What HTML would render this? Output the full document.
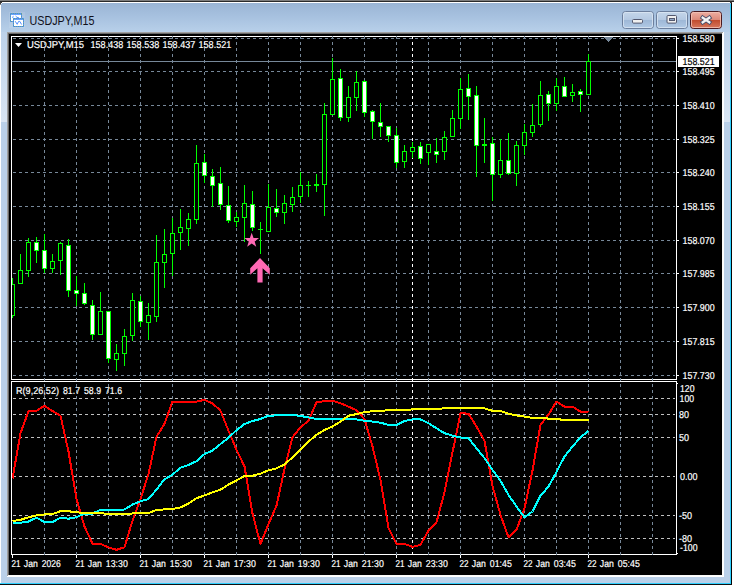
<!DOCTYPE html>
<html lang="en">
<head>
<meta charset="utf-8">
<title>USDJPY,M15</title>
<style>
html,body{margin:0;padding:0;background:#ffffff;overflow:hidden;}
body{width:734px;height:585px;font-family:"Liberation Sans",sans-serif;}
svg{display:block;position:absolute;left:0;top:0;}
text{white-space:pre;}
</style>
</head>
<body>
<svg width="734" height="585" viewBox="0 0 734 585" role="img" aria-label="USDJPY,M15 chart window">
<defs>
<linearGradient id="tg" x1="0" y1="0" x2="0" y2="1"><stop offset="0" stop-color="#99b4d4"/><stop offset="0.5" stop-color="#a8c2e0"/><stop offset="1" stop-color="#b9d1ea"/></linearGradient>
<linearGradient id="bb" x1="0" y1="0" x2="0" y2="1"><stop offset="0" stop-color="#c5d6ea"/><stop offset="0.48" stop-color="#b4c9e2"/><stop offset="0.5" stop-color="#9db7d6"/><stop offset="1" stop-color="#b3cbe6"/></linearGradient>
<linearGradient id="cb" x1="0" y1="0" x2="0" y2="1"><stop offset="0" stop-color="#eeb0a4"/><stop offset="0.48" stop-color="#dd8a7a"/><stop offset="0.5" stop-color="#c04a2c"/><stop offset="1" stop-color="#d87a60"/></linearGradient>
<linearGradient id="rg" x1="0" y1="0" x2="0" y2="1"><stop offset="0" stop-color="#bdd2ea"/><stop offset="1" stop-color="#d9e5f3"/></linearGradient>
</defs>
<rect x="0" y="0" width="734" height="585" fill="#ffffff"/>
<rect x="0" y="2" width="731" height="582" fill="#bad0e9"/>
<rect x="0" y="2" width="731" height="31" fill="url(#tg)"/>
<rect x="0" y="0" width="734" height="1" fill="#7d7d7d"/>
<rect x="0" y="1" width="734" height="1" fill="#2a2a2a"/>
<rect x="2" y="2" width="728" height="1" fill="#ffffff"/>
<rect x="0" y="2" width="2" height="1" fill="#3a3a3a"/>
<rect x="0" y="3" width="1" height="1" fill="#3a3a3a"/>
<rect x="0" y="4" width="1" height="1" fill="#8a8a8a"/>
<rect x="1" y="3" width="1" height="1" fill="#e8eef6"/>
<rect x="730" y="2" width="2" height="1" fill="#3a3a3a"/>
<rect x="731" y="3" width="1" height="1" fill="#3a3a3a"/>
<rect x="0" y="5" width="1" height="578" fill="#ffffff"/>
<rect x="730" y="4" width="1" height="580" fill="#2fd0ff"/>
<rect x="731" y="3" width="1" height="582" fill="#050505"/>
<rect x="732" y="2" width="2" height="583" fill="#ffffff"/>
<rect x="0" y="583" width="731" height="1" fill="#2fd0ff"/>
<rect x="0" y="584" width="732" height="1" fill="#101010"/>
<rect x="724" y="32" width="6" height="90" fill="url(#rg)"/>
<rect x="1" y="32" width="6" height="90" fill="url(#rg)"/>
<rect x="7" y="32" width="717" height="545" fill="#ffffff"/>
<rect x="7" y="32" width="716" height="544" fill="#a0a0a0"/>
<rect x="8" y="33" width="715" height="543" fill="#fafafa"/>
<rect x="8" y="33" width="714" height="542" fill="#696969"/>
<rect x="9" y="34" width="713" height="541" fill="#000000"/>
<rect x="9" y="12" width="16" height="16" fill="#ffffff" fill-opacity="0.10"/>
<g shape-rendering="crispEdges">
<rect x="10" y="13" width="12" height="9" fill="#4f8eff"/>
<rect x="11" y="14" width="10" height="1" fill="#6aa2ff"/>
<rect x="11" y="15" width="10" height="6" fill="#ffffff"/>
<rect x="13" y="18" width="11" height="9" fill="#4f8eff"/>
<rect x="14" y="19" width="9" height="1" fill="#6aa2ff"/>
<rect x="14" y="20" width="9" height="6" fill="#ffffff"/>
<path d="M11 13.5 H22 M14 18.5 H24 M14 26.5 H24 M11 21.5 H13" stroke="#5f9f9a" stroke-width="1" stroke-dasharray="1 1" fill="none"/>
<path d="M10.5 14 V22 M21.5 14 V18 M13.5 19 V27 M23.5 19 V27" stroke="#5f9f9a" stroke-width="1" stroke-dasharray="1 1" fill="none"/>
</g>
<path d="M13.6 16.2 L12.4 17.2 L13.6 18.2 M15.6 16 L17 17.4 L18.8 17.6" stroke="#4f8eff" stroke-width="1" fill="none"/>
<path d="M15.2 21.2 L17.2 24.3 L18.6 21.4 L19.8 21.4 L21.6 24.5" stroke="#4f8eff" stroke-width="1" fill="none"/>
<text x="29.5" y="25" font-family="'Liberation Sans', sans-serif" font-size="12px" fill="#10101a" textLength="65" lengthAdjust="spacingAndGlyphs">USDJPY,M15</text>
<rect x="622.5" y="11.5" width="31" height="17" rx="3" ry="3" fill="url(#bb)" stroke="#6c7f9d" stroke-width="1"/>
<rect x="623.5" y="12.5" width="29" height="15" rx="2" ry="2" fill="none" stroke="#dbe6f3" stroke-opacity="0.8" stroke-width="1"/>
<rect x="632.5" y="19.5" width="10" height="3.6" rx="1" fill="#f0f0f0" stroke="#53586e" stroke-width="1"/>
<rect x="656.5" y="11.5" width="31" height="17" rx="3" ry="3" fill="url(#bb)" stroke="#6c7f9d" stroke-width="1"/>
<rect x="657.5" y="12.5" width="29" height="15" rx="2" ry="2" fill="none" stroke="#dbe6f3" stroke-opacity="0.8" stroke-width="1"/>
<rect x="667" y="15.5" width="9.5" height="7.6" rx="1" fill="#f0f0f0" stroke="#53586e" stroke-width="1"/>
<rect x="669.5" y="18.5" width="5" height="2" fill="#8fa6c6" stroke="#53586e" stroke-width="1"/>
<rect x="690.5" y="11.5" width="31" height="17" rx="3" ry="3" fill="url(#cb)" stroke="#4a1a20" stroke-width="1"/>
<rect x="691.5" y="12.5" width="29" height="15" rx="2" ry="2" fill="none" stroke="#f3c4b8" stroke-opacity="0.8" stroke-width="1"/>
<path d="M702.7 17.7 L709.3 22.3 M709.3 17.7 L702.7 22.3" stroke="#4c516c" stroke-width="4.2" stroke-linecap="square" fill="none"/>
<path d="M702.7 17.7 L709.3 22.3 M709.3 17.7 L702.7 22.3" stroke="#f4f4f4" stroke-width="2.3" stroke-linecap="square" fill="none"/>
<g shape-rendering="crispEdges">
<rect x="11" y="36" width="666" height="1" fill="#ffffff"/>
<rect x="11" y="379" width="666" height="1" fill="#ffffff"/>
<rect x="11" y="36" width="1" height="344" fill="#ffffff"/>
<rect x="676" y="36" width="1" height="344" fill="#ffffff"/>
<rect x="11" y="381" width="666" height="1" fill="#ffffff"/>
<rect x="11" y="554" width="666" height="1" fill="#ffffff"/>
<rect x="11" y="381" width="1" height="174" fill="#ffffff"/>
<rect x="676" y="381" width="1" height="174" fill="#ffffff"/>
<path d="M13 38.5 H675" stroke="#778899" stroke-width="1" stroke-dasharray="3 3" fill="none"/>
<path d="M13 71.5 H675" stroke="#778899" stroke-width="1" stroke-dasharray="3 3" fill="none"/>
<path d="M13 105.5 H675" stroke="#778899" stroke-width="1" stroke-dasharray="3 3" fill="none"/>
<path d="M13 139.5 H675" stroke="#778899" stroke-width="1" stroke-dasharray="3 3" fill="none"/>
<path d="M13 172.5 H675" stroke="#778899" stroke-width="1" stroke-dasharray="3 3" fill="none"/>
<path d="M13 206.5 H675" stroke="#778899" stroke-width="1" stroke-dasharray="3 3" fill="none"/>
<path d="M13 240.5 H675" stroke="#778899" stroke-width="1" stroke-dasharray="3 3" fill="none"/>
<path d="M13 273.5 H675" stroke="#778899" stroke-width="1" stroke-dasharray="3 3" fill="none"/>
<path d="M13 307.5 H675" stroke="#778899" stroke-width="1" stroke-dasharray="3 3" fill="none"/>
<path d="M13 341.5 H675" stroke="#778899" stroke-width="1" stroke-dasharray="3 3" fill="none"/>
<path d="M13 375.5 H675" stroke="#778899" stroke-width="1" stroke-dasharray="3 3" fill="none"/>
<path d="M44.5 36 V555" stroke="#778899" stroke-width="1" stroke-dasharray="3 3" fill="none"/>
<path d="M76.5 36 V555" stroke="#778899" stroke-width="1" stroke-dasharray="3 3" fill="none"/>
<path d="M108.5 36 V555" stroke="#778899" stroke-width="1" stroke-dasharray="3 3" fill="none"/>
<path d="M140.5 36 V555" stroke="#778899" stroke-width="1" stroke-dasharray="3 3" fill="none"/>
<path d="M172.5 36 V555" stroke="#778899" stroke-width="1" stroke-dasharray="3 3" fill="none"/>
<path d="M204.5 36 V555" stroke="#778899" stroke-width="1" stroke-dasharray="3 3" fill="none"/>
<path d="M236.5 36 V555" stroke="#778899" stroke-width="1" stroke-dasharray="3 3" fill="none"/>
<path d="M268.5 36 V555" stroke="#778899" stroke-width="1" stroke-dasharray="3 3" fill="none"/>
<path d="M300.5 36 V555" stroke="#778899" stroke-width="1" stroke-dasharray="3 3" fill="none"/>
<path d="M332.5 36 V555" stroke="#778899" stroke-width="1" stroke-dasharray="3 3" fill="none"/>
<path d="M364.5 36 V555" stroke="#778899" stroke-width="1" stroke-dasharray="3 3" fill="none"/>
<path d="M396.5 36 V555" stroke="#778899" stroke-width="1" stroke-dasharray="3 3" fill="none"/>
<path d="M428.5 36 V555" stroke="#778899" stroke-width="1" stroke-dasharray="3 3" fill="none"/>
<path d="M460.5 36 V555" stroke="#778899" stroke-width="1" stroke-dasharray="3 3" fill="none"/>
<path d="M492.5 36 V555" stroke="#778899" stroke-width="1" stroke-dasharray="3 3" fill="none"/>
<path d="M524.5 36 V555" stroke="#778899" stroke-width="1" stroke-dasharray="3 3" fill="none"/>
<path d="M556.5 36 V555" stroke="#778899" stroke-width="1" stroke-dasharray="3 3" fill="none"/>
<path d="M588.5 36 V555" stroke="#778899" stroke-width="1" stroke-dasharray="3 3" fill="none"/>
<path d="M620.5 36 V555" stroke="#778899" stroke-width="1" stroke-dasharray="3 3" fill="none"/>
<path d="M652.5 36 V555" stroke="#778899" stroke-width="1" stroke-dasharray="3 3" fill="none"/>
<path d="M13 398.5 H675" stroke="#c0c0c0" stroke-width="1" stroke-dasharray="3 3" fill="none"/>
<path d="M13 414.5 H675" stroke="#c0c0c0" stroke-width="1" stroke-dasharray="3 3" fill="none"/>
<path d="M13 437.5 H675" stroke="#c0c0c0" stroke-width="1" stroke-dasharray="3 3" fill="none"/>
<path d="M13 476.5 H675" stroke="#c0c0c0" stroke-width="1" stroke-dasharray="3 3" fill="none"/>
<path d="M13 515.5 H675" stroke="#c0c0c0" stroke-width="1" stroke-dasharray="3 3" fill="none"/>
<path d="M13 538.5 H675" stroke="#c0c0c0" stroke-width="1" stroke-dasharray="3 3" fill="none"/>
<path d="M412.5 36 V555" stroke="#ffffff" stroke-width="1" stroke-dasharray="3 3" fill="none"/>
<rect x="12" y="61" width="664" height="1" fill="#778899"/>
<path d="M604 37 H613 L608.5 42 Z" fill="#778899"/>
<rect x="12" y="278" width="1" height="40" fill="#00ff00"/>
<rect x="10" y="284" width="5" height="32" fill="#00ff00"/>
<rect x="11" y="285" width="3" height="30" fill="#000000"/>
<rect x="20" y="254" width="1" height="30" fill="#00ff00"/>
<rect x="18" y="270" width="5" height="14" fill="#00ff00"/>
<rect x="19" y="271" width="3" height="12" fill="#000000"/>
<rect x="28" y="238" width="1" height="39" fill="#00ff00"/>
<rect x="26" y="242" width="5" height="29" fill="#00ff00"/>
<rect x="27" y="243" width="3" height="27" fill="#000000"/>
<rect x="36" y="237" width="1" height="26" fill="#00ff00"/>
<rect x="34" y="242" width="5" height="9" fill="#00ff00"/>
<rect x="35" y="243" width="3" height="7" fill="#ffffff"/>
<rect x="44" y="234" width="1" height="39" fill="#00ff00"/>
<rect x="42" y="250" width="5" height="19" fill="#00ff00"/>
<rect x="43" y="251" width="3" height="17" fill="#ffffff"/>
<rect x="52" y="254" width="1" height="19" fill="#00ff00"/>
<rect x="50" y="261" width="5" height="8" fill="#00ff00"/>
<rect x="51" y="262" width="3" height="6" fill="#000000"/>
<rect x="60" y="242" width="1" height="33" fill="#00ff00"/>
<rect x="58" y="243" width="5" height="18" fill="#00ff00"/>
<rect x="59" y="244" width="3" height="16" fill="#000000"/>
<rect x="68" y="239" width="1" height="58" fill="#00ff00"/>
<rect x="66" y="245" width="5" height="46" fill="#00ff00"/>
<rect x="67" y="246" width="3" height="44" fill="#ffffff"/>
<rect x="76" y="276" width="1" height="30" fill="#00ff00"/>
<rect x="74" y="290" width="5" height="4" fill="#00ff00"/>
<rect x="75" y="291" width="3" height="2" fill="#ffffff"/>
<rect x="84" y="283" width="1" height="22" fill="#00ff00"/>
<rect x="82" y="293" width="5" height="11" fill="#00ff00"/>
<rect x="83" y="294" width="3" height="9" fill="#ffffff"/>
<rect x="92" y="300" width="1" height="40" fill="#00ff00"/>
<rect x="90" y="305" width="5" height="30" fill="#00ff00"/>
<rect x="91" y="306" width="3" height="28" fill="#ffffff"/>
<rect x="100" y="292" width="1" height="43" fill="#00ff00"/>
<rect x="98" y="311" width="5" height="24" fill="#00ff00"/>
<rect x="99" y="312" width="3" height="22" fill="#000000"/>
<rect x="108" y="311" width="1" height="52" fill="#00ff00"/>
<rect x="106" y="311" width="5" height="48" fill="#00ff00"/>
<rect x="107" y="312" width="3" height="46" fill="#ffffff"/>
<rect x="116" y="344" width="1" height="27" fill="#00ff00"/>
<rect x="114" y="353" width="5" height="7" fill="#00ff00"/>
<rect x="115" y="354" width="3" height="5" fill="#000000"/>
<rect x="124" y="329" width="1" height="37" fill="#00ff00"/>
<rect x="122" y="336" width="5" height="18" fill="#00ff00"/>
<rect x="123" y="337" width="3" height="16" fill="#000000"/>
<rect x="132" y="293" width="1" height="48" fill="#00ff00"/>
<rect x="130" y="300" width="5" height="36" fill="#00ff00"/>
<rect x="131" y="301" width="3" height="34" fill="#000000"/>
<rect x="140" y="296" width="1" height="31" fill="#00ff00"/>
<rect x="138" y="301" width="5" height="21" fill="#00ff00"/>
<rect x="139" y="302" width="3" height="19" fill="#ffffff"/>
<rect x="148" y="303" width="1" height="37" fill="#00ff00"/>
<rect x="146" y="315" width="5" height="8" fill="#00ff00"/>
<rect x="147" y="316" width="3" height="6" fill="#000000"/>
<rect x="156" y="235" width="1" height="87" fill="#00ff00"/>
<rect x="154" y="262" width="5" height="55" fill="#00ff00"/>
<rect x="155" y="263" width="3" height="53" fill="#000000"/>
<rect x="164" y="229" width="1" height="59" fill="#00ff00"/>
<rect x="162" y="254" width="5" height="9" fill="#00ff00"/>
<rect x="163" y="255" width="3" height="7" fill="#000000"/>
<rect x="172" y="218" width="1" height="58" fill="#00ff00"/>
<rect x="170" y="233" width="5" height="21" fill="#00ff00"/>
<rect x="171" y="234" width="3" height="19" fill="#000000"/>
<rect x="180" y="209" width="1" height="41" fill="#00ff00"/>
<rect x="178" y="227" width="5" height="6" fill="#00ff00"/>
<rect x="179" y="228" width="3" height="4" fill="#000000"/>
<rect x="188" y="213" width="1" height="33" fill="#00ff00"/>
<rect x="186" y="219" width="5" height="10" fill="#00ff00"/>
<rect x="187" y="220" width="3" height="8" fill="#000000"/>
<rect x="196" y="145" width="1" height="79" fill="#00ff00"/>
<rect x="194" y="163" width="5" height="57" fill="#00ff00"/>
<rect x="195" y="164" width="3" height="55" fill="#000000"/>
<rect x="204" y="154" width="1" height="29" fill="#00ff00"/>
<rect x="202" y="162" width="5" height="14" fill="#00ff00"/>
<rect x="203" y="163" width="3" height="12" fill="#ffffff"/>
<rect x="212" y="169" width="1" height="38" fill="#00ff00"/>
<rect x="210" y="176" width="5" height="10" fill="#00ff00"/>
<rect x="211" y="177" width="3" height="8" fill="#ffffff"/>
<rect x="220" y="167" width="1" height="43" fill="#00ff00"/>
<rect x="218" y="183" width="5" height="22" fill="#00ff00"/>
<rect x="219" y="184" width="3" height="20" fill="#ffffff"/>
<rect x="228" y="186" width="1" height="37" fill="#00ff00"/>
<rect x="226" y="205" width="5" height="16" fill="#00ff00"/>
<rect x="227" y="206" width="3" height="14" fill="#ffffff"/>
<rect x="236" y="212" width="1" height="15" fill="#00ff00"/>
<rect x="234" y="217" width="5" height="5" fill="#00ff00"/>
<rect x="235" y="218" width="3" height="3" fill="#000000"/>
<rect x="244" y="185" width="1" height="57" fill="#00ff00"/>
<rect x="242" y="203" width="5" height="15" fill="#00ff00"/>
<rect x="243" y="204" width="3" height="13" fill="#000000"/>
<rect x="252" y="191" width="1" height="40" fill="#00ff00"/>
<rect x="250" y="204" width="5" height="24" fill="#00ff00"/>
<rect x="251" y="205" width="3" height="22" fill="#ffffff"/>
<rect x="260" y="222" width="1" height="32" fill="#00ff00"/>
<rect x="258" y="229" width="5" height="1" fill="#00ff00"/>
<rect x="268" y="184" width="1" height="48" fill="#00ff00"/>
<rect x="266" y="207" width="5" height="25" fill="#00ff00"/>
<rect x="267" y="208" width="3" height="23" fill="#000000"/>
<rect x="276" y="189" width="1" height="28" fill="#00ff00"/>
<rect x="274" y="208" width="5" height="5" fill="#00ff00"/>
<rect x="275" y="209" width="3" height="3" fill="#ffffff"/>
<rect x="284" y="195" width="1" height="29" fill="#00ff00"/>
<rect x="282" y="203" width="5" height="10" fill="#00ff00"/>
<rect x="283" y="204" width="3" height="8" fill="#000000"/>
<rect x="292" y="187" width="1" height="25" fill="#00ff00"/>
<rect x="290" y="197" width="5" height="8" fill="#00ff00"/>
<rect x="291" y="198" width="3" height="6" fill="#000000"/>
<rect x="300" y="172" width="1" height="31" fill="#00ff00"/>
<rect x="298" y="185" width="5" height="12" fill="#00ff00"/>
<rect x="299" y="186" width="3" height="10" fill="#000000"/>
<rect x="308" y="181" width="1" height="16" fill="#00ff00"/>
<rect x="306" y="185" width="5" height="1" fill="#00ff00"/>
<rect x="316" y="174" width="1" height="18" fill="#00ff00"/>
<rect x="314" y="184" width="5" height="2" fill="#00ff00"/>
<rect x="324" y="103" width="1" height="113" fill="#00ff00"/>
<rect x="322" y="114" width="5" height="71" fill="#00ff00"/>
<rect x="323" y="115" width="3" height="69" fill="#000000"/>
<rect x="332" y="58" width="1" height="57" fill="#00ff00"/>
<rect x="330" y="79" width="5" height="36" fill="#00ff00"/>
<rect x="331" y="80" width="3" height="34" fill="#000000"/>
<rect x="340" y="69" width="1" height="52" fill="#00ff00"/>
<rect x="338" y="78" width="5" height="40" fill="#00ff00"/>
<rect x="339" y="79" width="3" height="38" fill="#ffffff"/>
<rect x="348" y="86" width="1" height="36" fill="#00ff00"/>
<rect x="346" y="97" width="5" height="21" fill="#00ff00"/>
<rect x="347" y="98" width="3" height="19" fill="#000000"/>
<rect x="356" y="71" width="1" height="40" fill="#00ff00"/>
<rect x="354" y="82" width="5" height="16" fill="#00ff00"/>
<rect x="355" y="83" width="3" height="14" fill="#000000"/>
<rect x="364" y="80" width="1" height="37" fill="#00ff00"/>
<rect x="362" y="81" width="5" height="32" fill="#00ff00"/>
<rect x="363" y="82" width="3" height="30" fill="#ffffff"/>
<rect x="372" y="110" width="1" height="29" fill="#00ff00"/>
<rect x="370" y="111" width="5" height="11" fill="#00ff00"/>
<rect x="371" y="112" width="3" height="9" fill="#ffffff"/>
<rect x="380" y="103" width="1" height="34" fill="#00ff00"/>
<rect x="378" y="122" width="5" height="5" fill="#00ff00"/>
<rect x="379" y="123" width="3" height="3" fill="#ffffff"/>
<rect x="388" y="126" width="1" height="16" fill="#00ff00"/>
<rect x="386" y="126" width="5" height="10" fill="#00ff00"/>
<rect x="387" y="127" width="3" height="8" fill="#ffffff"/>
<rect x="396" y="128" width="1" height="40" fill="#00ff00"/>
<rect x="394" y="135" width="5" height="28" fill="#00ff00"/>
<rect x="395" y="136" width="3" height="26" fill="#ffffff"/>
<rect x="404" y="145" width="1" height="23" fill="#00ff00"/>
<rect x="402" y="151" width="5" height="11" fill="#00ff00"/>
<rect x="403" y="152" width="3" height="9" fill="#000000"/>
<rect x="412" y="142" width="1" height="16" fill="#00ff00"/>
<rect x="410" y="147" width="5" height="5" fill="#00ff00"/>
<rect x="411" y="148" width="3" height="3" fill="#000000"/>
<rect x="420" y="142" width="1" height="22" fill="#00ff00"/>
<rect x="418" y="146" width="5" height="13" fill="#00ff00"/>
<rect x="419" y="147" width="3" height="11" fill="#ffffff"/>
<rect x="428" y="144" width="1" height="21" fill="#00ff00"/>
<rect x="426" y="144" width="5" height="9" fill="#00ff00"/>
<rect x="427" y="145" width="3" height="7" fill="#000000"/>
<rect x="436" y="138" width="1" height="25" fill="#00ff00"/>
<rect x="434" y="151" width="5" height="4" fill="#00ff00"/>
<rect x="435" y="152" width="3" height="2" fill="#ffffff"/>
<rect x="444" y="131" width="1" height="29" fill="#00ff00"/>
<rect x="442" y="137" width="5" height="15" fill="#00ff00"/>
<rect x="443" y="138" width="3" height="13" fill="#000000"/>
<rect x="452" y="110" width="1" height="27" fill="#00ff00"/>
<rect x="450" y="118" width="5" height="19" fill="#00ff00"/>
<rect x="451" y="119" width="3" height="17" fill="#000000"/>
<rect x="460" y="78" width="1" height="51" fill="#00ff00"/>
<rect x="458" y="89" width="5" height="30" fill="#00ff00"/>
<rect x="459" y="90" width="3" height="28" fill="#000000"/>
<rect x="468" y="74" width="1" height="46" fill="#00ff00"/>
<rect x="466" y="88" width="5" height="9" fill="#00ff00"/>
<rect x="467" y="89" width="3" height="7" fill="#ffffff"/>
<rect x="476" y="86" width="1" height="91" fill="#00ff00"/>
<rect x="474" y="95" width="5" height="51" fill="#00ff00"/>
<rect x="475" y="96" width="3" height="49" fill="#ffffff"/>
<rect x="484" y="118" width="1" height="45" fill="#00ff00"/>
<rect x="482" y="144" width="5" height="2" fill="#00ff00"/>
<rect x="492" y="137" width="1" height="64" fill="#00ff00"/>
<rect x="490" y="143" width="5" height="32" fill="#00ff00"/>
<rect x="491" y="144" width="3" height="30" fill="#ffffff"/>
<rect x="500" y="139" width="1" height="39" fill="#00ff00"/>
<rect x="498" y="160" width="5" height="15" fill="#00ff00"/>
<rect x="499" y="161" width="3" height="13" fill="#000000"/>
<rect x="508" y="133" width="1" height="42" fill="#00ff00"/>
<rect x="506" y="160" width="5" height="14" fill="#00ff00"/>
<rect x="507" y="161" width="3" height="12" fill="#ffffff"/>
<rect x="516" y="141" width="1" height="45" fill="#00ff00"/>
<rect x="514" y="145" width="5" height="29" fill="#00ff00"/>
<rect x="515" y="146" width="3" height="27" fill="#000000"/>
<rect x="524" y="124" width="1" height="31" fill="#00ff00"/>
<rect x="522" y="132" width="5" height="14" fill="#00ff00"/>
<rect x="523" y="133" width="3" height="12" fill="#000000"/>
<rect x="532" y="104" width="1" height="33" fill="#00ff00"/>
<rect x="530" y="125" width="5" height="8" fill="#00ff00"/>
<rect x="531" y="126" width="3" height="6" fill="#000000"/>
<rect x="540" y="81" width="1" height="46" fill="#00ff00"/>
<rect x="538" y="95" width="5" height="30" fill="#00ff00"/>
<rect x="539" y="96" width="3" height="28" fill="#000000"/>
<rect x="548" y="91" width="1" height="30" fill="#00ff00"/>
<rect x="546" y="94" width="5" height="10" fill="#00ff00"/>
<rect x="547" y="95" width="3" height="8" fill="#ffffff"/>
<rect x="556" y="78" width="1" height="33" fill="#00ff00"/>
<rect x="554" y="86" width="5" height="18" fill="#00ff00"/>
<rect x="555" y="87" width="3" height="16" fill="#000000"/>
<rect x="564" y="77" width="1" height="20" fill="#00ff00"/>
<rect x="562" y="86" width="5" height="11" fill="#00ff00"/>
<rect x="563" y="87" width="3" height="9" fill="#ffffff"/>
<rect x="572" y="84" width="1" height="18" fill="#00ff00"/>
<rect x="570" y="92" width="5" height="4" fill="#00ff00"/>
<rect x="571" y="93" width="3" height="2" fill="#000000"/>
<rect x="580" y="89" width="1" height="23" fill="#00ff00"/>
<rect x="578" y="91" width="5" height="4" fill="#00ff00"/>
<rect x="579" y="92" width="3" height="2" fill="#ffffff"/>
<rect x="588" y="54" width="1" height="41" fill="#00ff00"/>
<rect x="586" y="61" width="5" height="34" fill="#00ff00"/>
<rect x="587" y="62" width="3" height="32" fill="#000000"/>
<rect x="9" y="37" width="2" height="342" fill="#000000"/>
<rect x="11" y="270" width="1" height="60" fill="#ffffff"/>
<rect x="677" y="38" width="2" height="1" fill="#ffffff"/>
<rect x="677" y="71" width="2" height="1" fill="#ffffff"/>
<rect x="677" y="105" width="2" height="1" fill="#ffffff"/>
<rect x="677" y="139" width="2" height="1" fill="#ffffff"/>
<rect x="677" y="172" width="2" height="1" fill="#ffffff"/>
<rect x="677" y="206" width="2" height="1" fill="#ffffff"/>
<rect x="677" y="240" width="2" height="1" fill="#ffffff"/>
<rect x="677" y="273" width="2" height="1" fill="#ffffff"/>
<rect x="677" y="307" width="2" height="1" fill="#ffffff"/>
<rect x="677" y="341" width="2" height="1" fill="#ffffff"/>
<rect x="677" y="375" width="2" height="1" fill="#ffffff"/>
<rect x="677" y="383" width="1" height="1" fill="#ffffff"/>
<rect x="677" y="553" width="1" height="1" fill="#ffffff"/>
<rect x="12" y="555" width="1" height="3" fill="#ffffff"/>
<rect x="76" y="555" width="1" height="3" fill="#ffffff"/>
<rect x="140" y="555" width="1" height="3" fill="#ffffff"/>
<rect x="204" y="555" width="1" height="3" fill="#ffffff"/>
<rect x="268" y="555" width="1" height="3" fill="#ffffff"/>
<rect x="332" y="555" width="1" height="3" fill="#ffffff"/>
<rect x="396" y="555" width="1" height="3" fill="#ffffff"/>
<rect x="460" y="555" width="1" height="3" fill="#ffffff"/>
<rect x="524" y="555" width="1" height="3" fill="#ffffff"/>
<rect x="588" y="555" width="1" height="3" fill="#ffffff"/>
<polyline points="12.5,478.5 20.5,433.2 28.5,411.1 36.5,410.7 44.5,405.8 52.5,411 60.5,415.7 68.5,451.5 76.5,499.1 84.5,526.5 92.5,543.6 100.5,543.9 108.5,547.3 116.5,549.8 124.5,547.3 132.5,520.7 140.5,499 148.5,474 156.5,436.8 164.5,423.7 172.5,401.6 180.5,401.6 188.5,401.6 196.5,401.6 204.5,399.9 212.5,403.3 220.5,410.7 228.5,430.7 236.5,449.8 244.5,466.5 252.5,513.5 260.5,544 268.5,524 276.5,505.7 284.5,469 292.5,437.3 300.5,427.4 308.5,420.7 316.5,402.3 324.5,401.1 332.5,400.6 340.5,403.3 348.5,406.6 356.5,410.3 364.5,419.1 372.5,446.5 380.5,480 388.5,528.2 396.5,543.9 404.5,543.9 412.5,546.9 420.5,544.8 428.5,530.6 436.5,522.3 444.5,492.4 452.5,452.5 460.5,413.2 468.5,413.7 476.5,426.5 484.5,440.7 492.5,486 500.5,514.9 508.5,537.3 516.5,529.8 524.5,508.2 532.5,470.5 540.5,424.8 548.5,414.5 556.5,401.6 564.5,406.6 572.5,406.6 580.5,411.6 588.5,411.9" fill="none" stroke="#ff0000" stroke-width="2" stroke-linejoin="round"/>
<polyline points="12.5,522.8 20.5,522.8 28.5,521.5 36.5,517.7 44.5,522 52.5,522 60.5,517.8 68.5,518.7 76.5,517.3 84.5,513.5 92.5,513.5 100.5,509.9 108.5,509.9 116.5,509.9 124.5,509.5 132.5,504.5 140.5,501.2 148.5,499 156.5,489.6 164.5,479.3 172.5,474.6 180.5,467.8 188.5,465 196.5,461.2 204.5,454 212.5,450.6 220.5,444 228.5,437.7 236.5,430.2 244.5,424 252.5,421 260.5,419 268.5,415.7 276.5,415.4 284.5,414.9 292.5,414.9 300.5,416 308.5,417.4 316.5,419 324.5,419 332.5,419.1 340.5,419.1 348.5,419.1 356.5,419.4 364.5,420.7 372.5,421.6 380.5,422.7 388.5,424.9 396.5,424.9 404.5,421 412.5,419.4 420.5,419.4 428.5,423.2 436.5,428.2 444.5,433.2 452.5,435.6 460.5,437.5 468.5,438.2 476.5,448.2 484.5,458.1 492.5,469.9 500.5,480.8 508.5,494.9 516.5,506.5 524.5,517.3 532.5,511.5 540.5,495.7 548.5,486.6 556.5,472 564.5,456.5 572.5,446.5 580.5,437.3 588.5,430.9" fill="none" stroke="#00ffff" stroke-width="2" stroke-linejoin="round"/>
<polyline points="12.5,521 20.5,519.8 28.5,517.3 36.5,515.4 44.5,514.5 52.5,514 60.5,511.2 68.5,511.2 76.5,512.4 84.5,512.7 92.5,513.2 100.5,513.2 108.5,514 116.5,514 124.5,514 132.5,513.5 140.5,513.2 148.5,513.2 156.5,509.9 164.5,509.4 172.5,509 180.5,507.4 188.5,503.5 196.5,498.2 204.5,495.4 212.5,492.4 220.5,489.6 228.5,484.6 236.5,480.4 244.5,476.1 252.5,475.8 260.5,473.6 268.5,470.3 276.5,468.3 284.5,464.5 292.5,457.3 300.5,449.8 308.5,441.5 316.5,434.9 324.5,429.9 332.5,426.5 340.5,421.6 348.5,415.7 356.5,414.1 364.5,412.1 372.5,411.2 380.5,410.8 388.5,410.3 396.5,409.9 404.5,409.9 412.5,409.4 420.5,409.1 428.5,409.1 436.5,409.1 444.5,408.3 452.5,407.9 460.5,407.9 468.5,407.9 476.5,407.9 484.5,408.3 492.5,410.8 500.5,411.1 508.5,413.7 516.5,415.4 524.5,416.6 532.5,417.9 540.5,417.9 548.5,418.6 556.5,419.1 564.5,419.9 572.5,419.9 580.5,419.9 588.5,419.9" fill="none" stroke="#ffff00" stroke-width="2" stroke-linejoin="round"/>
<rect x="678" y="56" width="41" height="11" fill="#ffffff"/>
</g>
<polygon points="251.70,232.80 253.52,237.99 259.02,238.12 254.65,241.46 256.23,246.73 251.70,243.60 247.17,246.73 248.75,241.46 244.38,238.12 249.88,237.99" fill="#ff69b4"/>
<path d="M260 258 L269.8 268.3 L269.8 274.8 L262.6 268.2 L262.6 282.6 L257.4 282.6 L257.4 268.2 L250.2 274.8 L250.2 268.3 Z" fill="#ff69b4"/>
<path d="M15 43 H22 L18.5 47 Z" fill="#ffffff"/>
<text y="47.8" font-family="'Liberation Sans', sans-serif" font-size="10px" text-rendering="geometricPrecision" fill="#ffffff" stroke="#ffffff" stroke-width="0.2"><tspan x="27" textLength="57" lengthAdjust="spacingAndGlyphs">USDJPY,M15</tspan> <tspan x="90.6" textLength="32.6" lengthAdjust="spacingAndGlyphs">158.438</tspan> <tspan x="126.6" textLength="32.6" lengthAdjust="spacingAndGlyphs">158.538</tspan> <tspan x="162.6" textLength="32.6" lengthAdjust="spacingAndGlyphs">158.437</tspan> <tspan x="198.6" textLength="32.6" lengthAdjust="spacingAndGlyphs">158.521</tspan></text>
<text x="682.6" y="41.8" font-family="'Liberation Sans', sans-serif" font-size="10px" text-rendering="geometricPrecision" fill="#ffffff" stroke="#ffffff" stroke-width="0.2" textLength="32" lengthAdjust="spacingAndGlyphs">158.580</text>
<text x="682.6" y="74.8" font-family="'Liberation Sans', sans-serif" font-size="10px" text-rendering="geometricPrecision" fill="#ffffff" stroke="#ffffff" stroke-width="0.2" textLength="32" lengthAdjust="spacingAndGlyphs">158.495</text>
<text x="682.6" y="108.8" font-family="'Liberation Sans', sans-serif" font-size="10px" text-rendering="geometricPrecision" fill="#ffffff" stroke="#ffffff" stroke-width="0.2" textLength="32" lengthAdjust="spacingAndGlyphs">158.410</text>
<text x="682.6" y="142.8" font-family="'Liberation Sans', sans-serif" font-size="10px" text-rendering="geometricPrecision" fill="#ffffff" stroke="#ffffff" stroke-width="0.2" textLength="32" lengthAdjust="spacingAndGlyphs">158.325</text>
<text x="682.6" y="175.8" font-family="'Liberation Sans', sans-serif" font-size="10px" text-rendering="geometricPrecision" fill="#ffffff" stroke="#ffffff" stroke-width="0.2" textLength="32" lengthAdjust="spacingAndGlyphs">158.240</text>
<text x="682.6" y="209.8" font-family="'Liberation Sans', sans-serif" font-size="10px" text-rendering="geometricPrecision" fill="#ffffff" stroke="#ffffff" stroke-width="0.2" textLength="32" lengthAdjust="spacingAndGlyphs">158.155</text>
<text x="682.6" y="243.8" font-family="'Liberation Sans', sans-serif" font-size="10px" text-rendering="geometricPrecision" fill="#ffffff" stroke="#ffffff" stroke-width="0.2" textLength="32" lengthAdjust="spacingAndGlyphs">158.070</text>
<text x="682.6" y="276.8" font-family="'Liberation Sans', sans-serif" font-size="10px" text-rendering="geometricPrecision" fill="#ffffff" stroke="#ffffff" stroke-width="0.2" textLength="32" lengthAdjust="spacingAndGlyphs">157.985</text>
<text x="682.6" y="310.8" font-family="'Liberation Sans', sans-serif" font-size="10px" text-rendering="geometricPrecision" fill="#ffffff" stroke="#ffffff" stroke-width="0.2" textLength="32" lengthAdjust="spacingAndGlyphs">157.900</text>
<text x="682.6" y="344.8" font-family="'Liberation Sans', sans-serif" font-size="10px" text-rendering="geometricPrecision" fill="#ffffff" stroke="#ffffff" stroke-width="0.2" textLength="32" lengthAdjust="spacingAndGlyphs">157.815</text>
<text x="682.6" y="378.8" font-family="'Liberation Sans', sans-serif" font-size="10px" text-rendering="geometricPrecision" fill="#ffffff" stroke="#ffffff" stroke-width="0.2" textLength="32" lengthAdjust="spacingAndGlyphs">157.730</text>
<text x="682.6" y="64.8" font-family="'Liberation Sans', sans-serif" font-size="10px" text-rendering="geometricPrecision" fill="#000000" stroke="#000000" stroke-width="0.2" textLength="32" lengthAdjust="spacingAndGlyphs">158.521</text>
<text x="680" y="391.8" font-family="'Liberation Sans', sans-serif" font-size="10px" text-rendering="geometricPrecision" fill="#ffffff" stroke="#ffffff" stroke-width="0.2" textLength="14.5" lengthAdjust="spacingAndGlyphs">120</text>
<text x="679.6" y="401.8" font-family="'Liberation Sans', sans-serif" font-size="10px" text-rendering="geometricPrecision" fill="#ffffff" stroke="#ffffff" stroke-width="0.2" textLength="14.5" lengthAdjust="spacingAndGlyphs">100</text>
<text x="679" y="417.8" font-family="'Liberation Sans', sans-serif" font-size="10px" text-rendering="geometricPrecision" fill="#ffffff" stroke="#ffffff" stroke-width="0.2" textLength="10" lengthAdjust="spacingAndGlyphs">80</text>
<text x="679" y="440.8" font-family="'Liberation Sans', sans-serif" font-size="10px" text-rendering="geometricPrecision" fill="#ffffff" stroke="#ffffff" stroke-width="0.2" textLength="10" lengthAdjust="spacingAndGlyphs">50</text>
<text x="680" y="479.8" font-family="'Liberation Sans', sans-serif" font-size="10px" text-rendering="geometricPrecision" fill="#ffffff" stroke="#ffffff" stroke-width="0.2" textLength="17.5" lengthAdjust="spacingAndGlyphs">0.00</text>
<text x="679" y="518.8" font-family="'Liberation Sans', sans-serif" font-size="10px" text-rendering="geometricPrecision" fill="#ffffff" stroke="#ffffff" stroke-width="0.2" textLength="13" lengthAdjust="spacingAndGlyphs">-50</text>
<text x="679" y="541.8" font-family="'Liberation Sans', sans-serif" font-size="10px" text-rendering="geometricPrecision" fill="#ffffff" stroke="#ffffff" stroke-width="0.2" textLength="13" lengthAdjust="spacingAndGlyphs">-80</text>
<text x="680" y="550.8" font-family="'Liberation Sans', sans-serif" font-size="10px" text-rendering="geometricPrecision" fill="#ffffff" stroke="#ffffff" stroke-width="0.2" textLength="17.5" lengthAdjust="spacingAndGlyphs">-100</text>
<text y="393.8" font-family="'Liberation Sans', sans-serif" font-size="10px" text-rendering="geometricPrecision" fill="#ffffff" stroke="#ffffff" stroke-width="0.2"><tspan x="16" textLength="43" lengthAdjust="spacingAndGlyphs">R(9,26,52)</tspan> <tspan x="63" textLength="17" lengthAdjust="spacingAndGlyphs">81.7</tspan> <tspan x="84" textLength="17" lengthAdjust="spacingAndGlyphs">58.9</tspan> <tspan x="105" textLength="17" lengthAdjust="spacingAndGlyphs">71.6</tspan></text>
<text y="566.8" font-family="'Liberation Sans', sans-serif" font-size="10px" text-rendering="geometricPrecision" fill="#ffffff" stroke="#ffffff" stroke-width="0.2"><tspan x="11.5" textLength="9" lengthAdjust="spacingAndGlyphs">21</tspan> <tspan x="23.8" textLength="14" lengthAdjust="spacingAndGlyphs">Jan</tspan> <tspan x="41.8" textLength="19" lengthAdjust="spacingAndGlyphs">2026</tspan></text>
<text y="566.8" font-family="'Liberation Sans', sans-serif" font-size="10px" text-rendering="geometricPrecision" fill="#ffffff" stroke="#ffffff" stroke-width="0.2"><tspan x="75.5" textLength="9" lengthAdjust="spacingAndGlyphs">21</tspan> <tspan x="87.8" textLength="14" lengthAdjust="spacingAndGlyphs">Jan</tspan> <tspan x="105.8" textLength="22" lengthAdjust="spacingAndGlyphs">13:30</tspan></text>
<text y="566.8" font-family="'Liberation Sans', sans-serif" font-size="10px" text-rendering="geometricPrecision" fill="#ffffff" stroke="#ffffff" stroke-width="0.2"><tspan x="139.5" textLength="9" lengthAdjust="spacingAndGlyphs">21</tspan> <tspan x="151.8" textLength="14" lengthAdjust="spacingAndGlyphs">Jan</tspan> <tspan x="169.8" textLength="22" lengthAdjust="spacingAndGlyphs">15:30</tspan></text>
<text y="566.8" font-family="'Liberation Sans', sans-serif" font-size="10px" text-rendering="geometricPrecision" fill="#ffffff" stroke="#ffffff" stroke-width="0.2"><tspan x="203.5" textLength="9" lengthAdjust="spacingAndGlyphs">21</tspan> <tspan x="215.8" textLength="14" lengthAdjust="spacingAndGlyphs">Jan</tspan> <tspan x="233.8" textLength="22" lengthAdjust="spacingAndGlyphs">17:30</tspan></text>
<text y="566.8" font-family="'Liberation Sans', sans-serif" font-size="10px" text-rendering="geometricPrecision" fill="#ffffff" stroke="#ffffff" stroke-width="0.2"><tspan x="267.5" textLength="9" lengthAdjust="spacingAndGlyphs">21</tspan> <tspan x="279.8" textLength="14" lengthAdjust="spacingAndGlyphs">Jan</tspan> <tspan x="297.8" textLength="22" lengthAdjust="spacingAndGlyphs">19:30</tspan></text>
<text y="566.8" font-family="'Liberation Sans', sans-serif" font-size="10px" text-rendering="geometricPrecision" fill="#ffffff" stroke="#ffffff" stroke-width="0.2"><tspan x="331.5" textLength="9" lengthAdjust="spacingAndGlyphs">21</tspan> <tspan x="343.8" textLength="14" lengthAdjust="spacingAndGlyphs">Jan</tspan> <tspan x="361.8" textLength="22" lengthAdjust="spacingAndGlyphs">21:30</tspan></text>
<text y="566.8" font-family="'Liberation Sans', sans-serif" font-size="10px" text-rendering="geometricPrecision" fill="#ffffff" stroke="#ffffff" stroke-width="0.2"><tspan x="395.5" textLength="9" lengthAdjust="spacingAndGlyphs">21</tspan> <tspan x="407.8" textLength="14" lengthAdjust="spacingAndGlyphs">Jan</tspan> <tspan x="425.8" textLength="22" lengthAdjust="spacingAndGlyphs">23:30</tspan></text>
<text y="566.8" font-family="'Liberation Sans', sans-serif" font-size="10px" text-rendering="geometricPrecision" fill="#ffffff" stroke="#ffffff" stroke-width="0.2"><tspan x="459.5" textLength="9" lengthAdjust="spacingAndGlyphs">22</tspan> <tspan x="471.8" textLength="14" lengthAdjust="spacingAndGlyphs">Jan</tspan> <tspan x="489.8" textLength="22" lengthAdjust="spacingAndGlyphs">01:45</tspan></text>
<text y="566.8" font-family="'Liberation Sans', sans-serif" font-size="10px" text-rendering="geometricPrecision" fill="#ffffff" stroke="#ffffff" stroke-width="0.2"><tspan x="523.5" textLength="9" lengthAdjust="spacingAndGlyphs">22</tspan> <tspan x="535.8" textLength="14" lengthAdjust="spacingAndGlyphs">Jan</tspan> <tspan x="553.8" textLength="22" lengthAdjust="spacingAndGlyphs">03:45</tspan></text>
<text y="566.8" font-family="'Liberation Sans', sans-serif" font-size="10px" text-rendering="geometricPrecision" fill="#ffffff" stroke="#ffffff" stroke-width="0.2"><tspan x="587.5" textLength="9" lengthAdjust="spacingAndGlyphs">22</tspan> <tspan x="599.8" textLength="14" lengthAdjust="spacingAndGlyphs">Jan</tspan> <tspan x="617.8" textLength="22" lengthAdjust="spacingAndGlyphs">05:45</tspan></text>
</svg>
</body>
</html>
